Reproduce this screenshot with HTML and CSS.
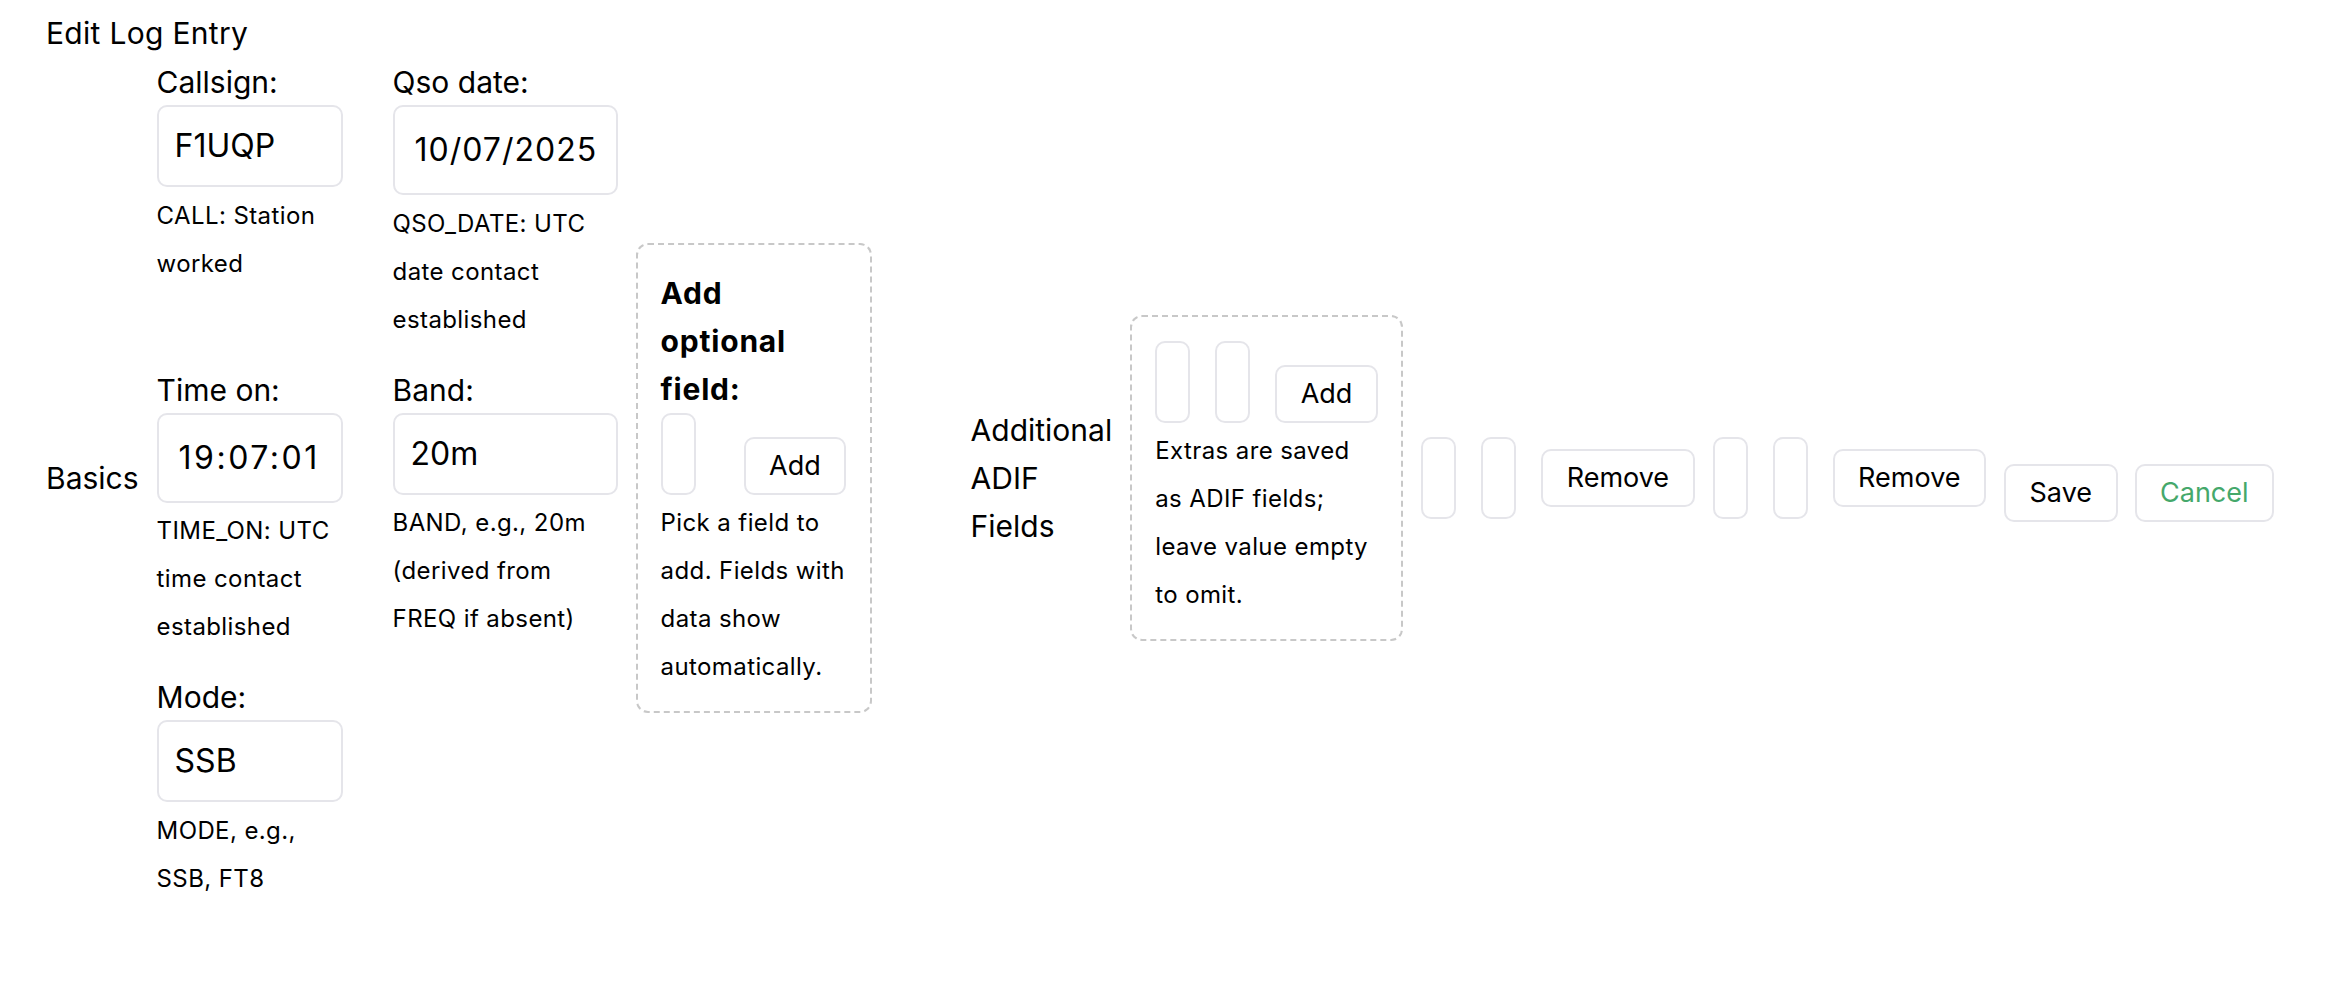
FILE: index.html
```html
<!DOCTYPE html>
<html lang="en">
<head>
  <meta charset="UTF-8">
  <meta name="viewport" content="width=device-width, initial-scale=1.0">
  <title>Edit Log Entry</title>
  <link rel="stylesheet" href="styles.css">
</head>
<body>
  <h1 class="page-title">Edit Log Entry</h1>

  <form class="entry">
    <span class="section">Basics</span>

    <div class="fields">
      <div class="field">
        <label for="call">Callsign:</label>
        <input id="call" type="text" value="F1UQP">
        <p class="hint">CALL: Station worked</p>
      </div>
      <div class="field">
        <label for="qso-date">Qso date:</label>
        <input id="qso-date" class="datetime" type="text" value="10/07/2025">
        <p class="hint">QSO_DATE: UTC date contact established</p>
      </div>
      <div class="field">
        <label for="time-on">Time on:</label>
        <input id="time-on" class="datetime time" type="text" value="19:07:01">
        <p class="hint">TIME_ON: UTC time contact established</p>
      </div>
      <div class="field">
        <label for="band">Band:</label>
        <input id="band" type="text" value="20m">
        <p class="hint">BAND, e.g., 20m (derived from FREQ&nbsp;if&nbsp;absent)</p>
      </div>
      <div class="field">
        <label for="mode">Mode:</label>
        <input id="mode" type="text" value="SSB">
        <p class="hint">MODE, e.g., SSB, FT8</p>
      </div>
    </div>

    <!-- optional field picker -->
    <div class="box picker">
      <h3 class="picker-title">Add optional field:</h3>
      <div class="box-row">
        <select class="mini"></select>
        <button type="button" class="btn">Add</button>
      </div>
      <p class="hint">Pick a field to add. Fields with data show automatically.</p>
    </div>

    <span class="section extra-title">Additional ADIF Fields</span>

    <div class="box extras">
      <div class="box-row">
        <input class="mini" type="text">
        <input class="mini" type="text">
        <button type="button" class="btn">Add</button>
      </div>
      <p class="hint">Extras are saved as&nbsp;ADIF fields; leave&nbsp;value&nbsp;empty to omit.</p>
    </div>

    <div class="pair">
      <input class="mini" type="text">
      <input class="mini" type="text">
      <button type="button" class="btn">Remove</button>
    </div>
    <div class="pair">
      <input class="mini" type="text">
      <input class="mini" type="text">
      <button type="button" class="btn">Remove</button>
    </div>

    <div class="actions">
      <button type="submit" class="btn">Save</button>
      <button type="button" class="btn btn-cancel">Cancel</button>
    </div>
  </form>
</body>
</html>
```

FILE: styles.css
```css
body {
  margin: 0;
  padding: 16px 46px;
  font-family: Inter, "Noto Sans", sans-serif;
  color: #000;
  background: #fff;
}
.page-title {
  font-size: 30px;
  font-weight: 400;
  letter-spacing: 0.3px;
  line-height: 34px;
  margin: 0 0 3px;
}
.entry {
  display: flex;
  align-items: center;
  gap: 18px;
}
.entry > * {
  flex-shrink: 0;
}
.section {
  font-size: 30px;
  line-height: 48px;
  width: min-content;
}
.extra-title {
  margin-left: 81px;
}
.fields {
  display: grid;
  grid-template-columns: 186px 225px;
  column-gap: 50px;
  row-gap: 17px;
}
.field {
  display: flex;
  flex-direction: column;
  padding-top: 12px;
}
.field label {
  font-size: 30px;
  line-height: 34px;
  margin-bottom: 6px;
}
.field input {
  font-family: inherit;
  font-size: 32px;
  line-height: 38px;
  color: #000;
  padding: 20px 16px;
  border: 2px solid #e5e5ea;
  border-radius: 10px;
  width: 100%;
  box-sizing: border-box;
}
.field input.datetime {
  padding: 24px 20px;
  letter-spacing: 1px;
}
.field input.time {
  letter-spacing: 2.5px;
}
.hint {
  margin: 4.5px 0 0;
  font-size: 24px;
  letter-spacing: 0.4px;
  line-height: 48px;
}
.box {
  border: 2px dashed #c8c8c8;
  border-radius: 12px;
  padding: 24px 23px 20px;
}
.picker {
  width: 186px;
}
.extras {
  width: 223px;
}
.picker-title {
  font-size: 30px;
  font-weight: 700;
  letter-spacing: 0.8px;
  line-height: 48px;
  margin: 0;
  width: min-content;
}
.box-row {
  display: flex;
  align-items: flex-end;
  gap: 25px;
}
.picker .mini {
  margin-right: 23px;
}
.mini {
  width: 35px;
  height: 82px;
  box-sizing: border-box;
  padding: 0;
  border: 2px solid #e5e5ea;
  border-radius: 10px;
  background: #fff;
  appearance: none;
}
.btn {
  font-family: inherit;
  font-size: 27px;
  line-height: 34px;
  padding: 10px 23.5px;
  border: 2px solid #e5e5ea;
  border-radius: 10px;
  background: #fff;
  color: #000;
}
.btn-cancel {
  color: #45a86b;
}
.pair {
  display: flex;
  align-items: center;
  gap: 25px;
}
.actions {
  display: flex;
  gap: 17px;
  margin-top: 31px;
}
```
